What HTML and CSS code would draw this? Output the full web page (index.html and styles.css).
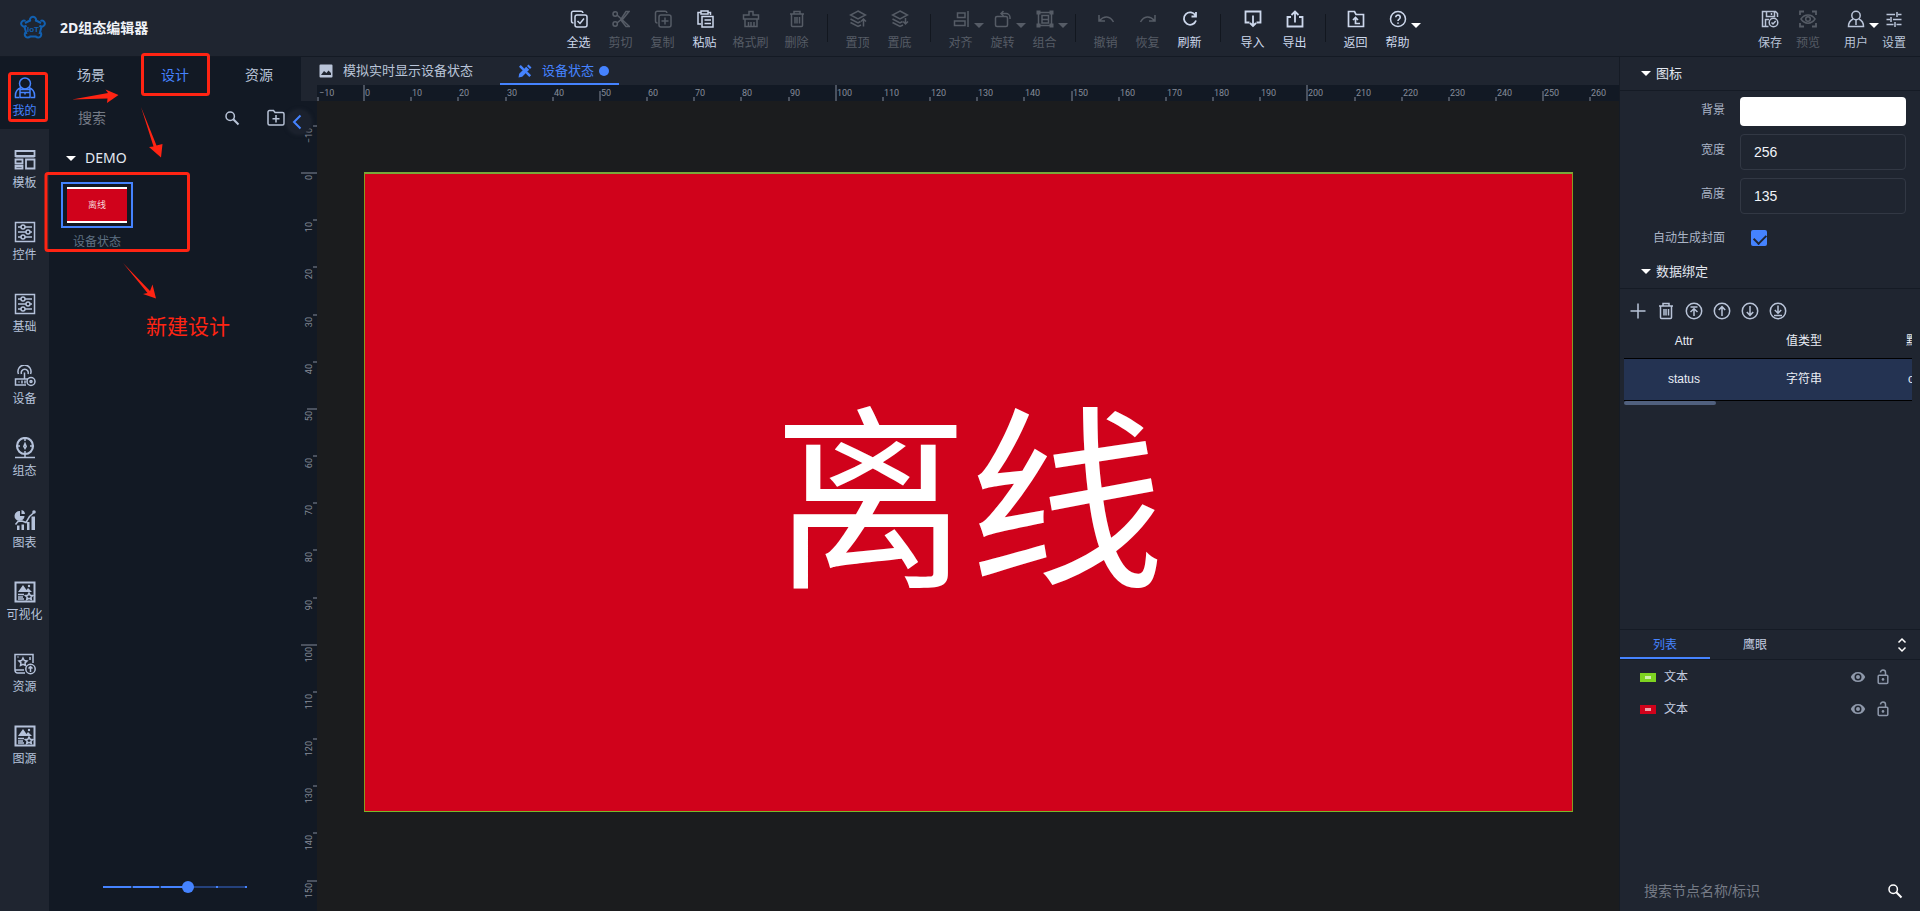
FILE: index.html
```html
<!DOCTYPE html>
<html lang="zh-CN">
<head>
<meta charset="utf-8">
<title>2D组态编辑器</title>
<link rel="stylesheet" href="styles.css">
</head>
<body>
<svg class="sprite" aria-hidden="true">
  <symbol id="i-selall" viewBox="0 0 18 18"><rect x="5" y="5" width="12" height="12" rx="2"/><path d="M3.500 13A2 2 0 0 1 1.500 11V3a1.700 1.700 0 0 1 1.700-1.700H11A2 2 0 0 1 13 3M7.500 11l2.500 2.500 4-5"/></symbol>
  <symbol id="i-cut" viewBox="0 0 18 18"><circle cx="3.200" cy="4" r="2.200"/><circle cx="3.200" cy="14" r="2.200"/><path d="M5 5l12.500 11.500h-3.500L8.500 9.500M5 13l3.500-3L14 1.500h3L10.500 9.500"/></symbol>
  <symbol id="i-copy" viewBox="0 0 18 18"><rect x="5" y="5" width="12" height="12" rx="2"/><path d="M3.500 13A2 2 0 0 1 1.500 11V3a1.700 1.700 0 0 1 1.700-1.700H11A2 2 0 0 1 13 3M11 7.500v7M7.500 11h7"/></symbol>
  <symbol id="i-paste" viewBox="0 0 18 18"><path d="M5 14H2V2.500h3M12 2.500h2.500V5"/><rect x="5" y="1" width="7" height="3" /><rect x="6" y="6.500" width="11" height="10.500"/><path d="M8.500 10H15M8.500 13.500H15"/></symbol>
  <symbol id="i-brush" viewBox="0 0 18 18"><path d="M1.500 9V5H7V1.500h4V5h5.500v4zM3 9v7.500h12V9M6.500 12v4.500M9 12v4.500M12 12v4.500"/></symbol>
  <symbol id="i-trash" viewBox="0 0 18 18"><path d="M2 4h14M6 3.500v-2h6v2M3.500 4v11.500a1 1 0 0 0 1 1h9a1 1 0 0 0 1-1V4M7 7v6.500M9 7v6.500M11.500 7v6.500"/></symbol>
  <symbol id="i-top" viewBox="0 0 18 18"><path d="M9 1l7.500 4L9 9 1.500 5zM1.500 9L9 13l2.500-1.500M1.500 12.500L9 16.500l3-1.500M14.500 16.500V9M12 11.500L14.500 9l2.500 2.500"/></symbol>
  <symbol id="i-bottom" viewBox="0 0 18 18"><path d="M9 1l7.500 4L9 9 1.500 5zM1.500 9L9 13l2.500-1.500M1.500 12.500L9 16.500l3-1.500M14.500 8v6M12.200 11.500l2.300 2.500 2.500-2.500"/></symbol>
  <symbol id="i-align" viewBox="0 0 18 18"><path d="M16 1v16M5.500 3H13v4.500H5.500zM2.500 11H13v4.500H2.500z"/></symbol>
  <symbol id="i-rotate" viewBox="0 0 18 18"><rect x="1.500" y="6.500" width="12" height="10" rx="1.500"/><path d="M7 3.500h5a4 4 0 0 1 4 4V9M9.500 1L7 3.500 9.500 6"/></symbol>
  <symbol id="i-group" viewBox="0 0 18 18"><path d="M2.500 2.500h13v13h-13zM6 5.500h6.500v4H6zM6 9.500V13h6.500V9.500"/><path class="solid" d="M0.500 0.500h4v4h-4zM13.500 0.500h4v4h-4zM0.500 13.500h4v4h-4zM13.500 13.500h4v4h-4z"/></symbol>
  <symbol id="i-undo" viewBox="0 0 18 18"><path d="M2 5v6h6M2.500 10.500C7 5.500 13 5.500 16.500 12"/></symbol>
  <symbol id="i-redo" viewBox="0 0 18 18"><path d="M16 5v6h-6M15.500 10.500C11 5.500 5 5.500 1.500 12"/></symbol>
  <symbol id="i-refresh" viewBox="0 0 18 18"><path d="M14.500 5.500A6.200 6.200 0 1 0 15 10.500M15 2v4.500h-4.500" stroke-width="1.800"/></symbol>
  <symbol id="i-import" viewBox="0 0 18 18"><path d="M5.500 12.500H1.500v-11h15v11h-4M9 5.500v10M6 13l3 3 3-3" stroke-width="1.800"/></symbol>
  <symbol id="i-export" viewBox="0 0 18 18"><path d="M5 7H1.500v9.500h15V7H13M9 12.500V2M5.500 5L9 1.500 12.500 5" stroke-width="1.800"/></symbol>
  <symbol id="i-back" viewBox="0 0 18 18"><path d="M1.500 1.500h6l1.500 3h7.500v12h-15zM13 13.500H8.500V8M6 10l2.500-2.500L11 10" stroke-width="1.700"/></symbol>
  <symbol id="i-help" viewBox="0 0 18 18"><circle cx="9" cy="9" r="7.500"/><path d="M6.800 7.300a2.200 2.200 0 1 1 3.400 1.800c-.8.500-1.200.9-1.200 1.900M9 12.600v1.200" stroke-width="1.700"/></symbol>
  <symbol id="i-save" viewBox="0 0 18 18"><path d="M7.500 16.500H1.500v-15h13l2 2v3.500M5.500 1.500v5h8v-5M10.500 3v2M4.500 16.500V9.500H8"/><circle cx="12.500" cy="12.500" r="4.300"/><path d="M10.500 12.500l1.500 1.500 2.700-3"/></symbol>
  <symbol id="i-preview" viewBox="0 0 18 18"><path d="M1 5V1.500h4M13 1.500h4V5M17 13v3.500h-4M5 16.500H1V13" stroke-width="1.800"/><path d="M2 9c3.500-5.500 10.500-5.500 14 0-3.500 5.500-10.500 5.500-14 0z"/><circle cx="9" cy="9" r="2.300"/></symbol>
  <symbol id="i-user" viewBox="0 0 18 18"><circle cx="9" cy="5.500" r="4.200"/><path d="M6 9C3 10.500 1.500 13 1.500 16.500h15C16.500 13 15 10.500 12 9M9 10v5"/></symbol>
  <symbol id="i-sliders" viewBox="0 0 18 18"><path d="M1.500 4.500h8.500M13 4.500h3.500M12 2v5M1.500 9.500H5M8 9.500h8.500M6 7v5M1.500 14.500h7M11.500 14.500h5M10 12v5"/></symbol>
  <symbol id="i-mine" viewBox="0 0 22 22"><circle cx="11" cy="6.500" r="5.500"/><path d="M7 10.500C3 12 1 16 1.500 20.500H5M15 10.500c4 1.500 6 5.500 5.500 10H17M6 12.500h10v8H6zM6 15.500h10M11 15.500v2"/></symbol>
  <symbol id="i-template" viewBox="0 0 22 22"><path d="M1.500 2h19v5h-19zM1.500 7.500h19M1.500 10.500h7v4h-7zM1.500 17h7v2.500h-7zM12 10.500h8.500v9H12z" stroke-width="1.800"/></symbol>
  <symbol id="i-control" viewBox="0 0 22 22"><rect x="1.500" y="1.500" width="19" height="19"/><path d="M4 6h3M11 6h7M4 11h8M16 11h2M4 16h3M11 16h7"/><circle cx="9" cy="6" r="2"/><circle cx="14" cy="11" r="2"/><circle cx="9" cy="16" r="2"/></symbol>
  <symbol id="i-device" viewBox="0 0 22 22"><path d="M4.500 9a6.500 6.500 0 1 1 12 0M7.500 9a3.500 3.500 0 1 1 6.500 0M10.500 7.500V14M12 20H1.500v-6H14M4.500 17h1M8 15.500v3M11 15.500v3"/><circle cx="17" cy="16.500" r="4"/><circle cx="17" cy="16.500" r="1"/></symbol>
  <symbol id="i-config" viewBox="0 0 22 22"><circle cx="11" cy="9" r="8" stroke-width="2.200"/><path d="M11 2v2M11 14v2M4 9h2M16 9h2M11 17v3M1 20.500h20M11 6.500L9.800 9.500l1.200 2 1.200-2z"/></symbol>
  <symbol id="i-chart" viewBox="0 0 22 22"><path class="solid" d="M6 2v5h4.500A5 5 0 1 1 6 2zM7.500 1A4.500 4.500 0 0 1 11 5H7.500zM3 16.500h2.500V21H3zM7.500 15.500H10V21H7.500zM13 13h2.500v8H13zM17.500 7.500h3.500V21h-3.500z"/><path d="M1.500 15.500L4 12.500 8 12l4 1.500 3.500-6 4-3.500"/><circle class="solid" cx="20" cy="3" r="1.800"/></symbol>
  <symbol id="i-visual" viewBox="0 0 22 22"><rect x="1.500" y="1.500" width="19" height="19" stroke-width="2"/><path class="solid" d="M4 11l5-7 3.500 5 1.500-2 4 4z"/><circle class="solid" cx="15" cy="5" r="1.200"/><path d="M4 13.500h6M4 16h5M4 18h6"/><path d="M15 12l1.200 2.200 2.500.3-1.800 1.700.4 2.300-2.300-1.200-2.300 1.200.5-2.300-1.800-1.700 2.500-.3z"/></symbol>
  <symbol id="i-resource" viewBox="0 0 22 22"><path d="M11 20H3.500a2.500 2.500 0 0 1-2.500-2.500V1.500h18V10M1 17h9M3.500 4h1M16 4v3"/><path d="M9 5l1.300 2.500 2.700.4-2 2 .5 2.600L9 11.300 6.500 12.500 7 9.900l-2-2 2.700-.4z"/><circle cx="16.500" cy="16" r="4.700"/><path d="M16.500 19v-5M14.500 15.500l2-2 2 2"/></symbol>
  <symbol id="i-search" viewBox="0 0 16 16"><circle cx="6.200" cy="6.200" r="4.200"/><path d="M9.300 9.300L14.500 14.500" stroke-width="2"/></symbol>
  <symbol id="i-folder" viewBox="0 0 18 18"><path d="M1 14V3a1.500 1.500 0 0 1 1.500-1.500h4l1.500 2h7.500A1.500 1.500 0 0 1 17 5v9.500a1.500 1.500 0 0 1-1.500 1.500h-13A1.500 1.500 0 0 1 1 14.500zM9 6v7.500M5.500 9.700h7"/></symbol>
  <symbol id="i-chev" viewBox="0 0 10 16"><path d="M8.500 1.500L2 8l6.500 6.500"/></symbol>
  <symbol id="i-image" viewBox="0 0 14 14"><path class="solid" fill-rule="evenodd" d="M1.500 0.500h11a1 1 0 0 1 1 1v11a1 1 0 0 1-1 1h-11a1 1 0 0 1-1-1v-11a1 1 0 0 1 1-1zM2 11h10V9L9.500 6.500 7.500 9 5 7z"/></symbol>
  <symbol id="i-design" viewBox="0 0 14 14"><path class="solid" d="M1 2.800L2.800 1 6.200 4.400 4.400 6.200zM7.800 9.600l1.800-1.800 3.500 3.500-1.800 1.800zM.5 13.500l.7-3.700 7-7 3 3-7 7zM9 2l1.500-1.500L13.500 3.500 12 5z"/><path d="M3.500 3.500l7 7" stroke-width="1"/></symbol>
  <symbol id="i-plus" viewBox="0 0 18 18"><path d="M9 1.500v15M1.500 9h15"/></symbol>
  <symbol id="i-ctop" viewBox="0 0 18 18"><circle cx="9" cy="9" r="7.700"/><path d="M5.500 5h7M9 14V7M5.500 10L9 6.800l3.500 3.200"/></symbol>
  <symbol id="i-cup" viewBox="0 0 18 18"><circle cx="9" cy="9" r="7.700"/><path d="M9 14V4.800M5.800 8L9 4.700 12.200 8"/></symbol>
  <symbol id="i-cdown" viewBox="0 0 18 18"><circle cx="9" cy="9" r="7.700"/><path d="M9 4v9.200M5.800 10L9 13.300l3.200-3.300"/></symbol>
  <symbol id="i-cbottom" viewBox="0 0 18 18"><circle cx="9" cy="9" r="7.700"/><path d="M5 13.500h8M9 3.500V11M5.800 8L9 11.200 12.200 8"/></symbol>
  <symbol id="i-sort" viewBox="0 0 10 16"><path d="M1.500 5.500L5 2l3.500 3.500M1.500 10.500L5 14l3.500-3.500"/></symbol>
  <symbol id="i-eye" viewBox="0 0 16 16"><path class="solid" fill-rule="evenodd" d="M8 3C4.500 3 2 5 .8 8 2 11 4.500 13 8 13s6-2 7.200-5C14 5 11.500 3 8 3zm0 8.500a3.500 3.500 0 1 1 0-7 3.500 3.500 0 0 1 0 7zM8 6a2 2 0 1 0 0 4 2 2 0 0 0 0-4z"/></symbol>
  <symbol id="i-lock" viewBox="0 0 12 16"><rect x="1.200" y="6.200" width="9.600" height="8.400" rx="1"/><path d="M3.500 3.500a2.500 2.500 0 0 1 5 0V6"/><circle class="solid" cx="6" cy="10.400" r="1.300"/></symbol>
</svg>

<div class="app">
  <header class="topbar">
    <div class="brand">
      <svg class="logo" viewBox="0 0 26 26" aria-hidden="true">
        <path d="M10 5.500L5 8M16 5.500L21 8M4.500 12l2 7M21.500 12l-2 7M9.500 21.500h7"/>
        <path d="M10.500 6.500a3 3 0 1 1 5 0M6.500 10.500A3 3 0 1 1 5.500 5.800M19.500 10.500a3 3 0 1 0 1-4.700M5.500 17.500a3 3 0 1 0 4.500 4M20.500 17.500a3 3 0 1 1-4.500 4"/>
        <text x="13" y="16.500" text-anchor="middle">IoT</text>
      </svg>
      <h1 class="title">2D组态编辑器</h1>
    </div>
    <nav class="tools">
      <button class="tool"><svg class="ico"><use href="#i-selall"/></svg>全选</button>
      <button class="tool off"><svg class="ico"><use href="#i-cut"/></svg>剪切</button>
      <button class="tool off"><svg class="ico"><use href="#i-copy"/></svg>复制</button>
      <button class="tool"><svg class="ico"><use href="#i-paste"/></svg>粘贴</button>
      <button class="tool wide off"><svg class="ico"><use href="#i-brush"/></svg>格式刷</button>
      <button class="tool off"><svg class="ico"><use href="#i-trash"/></svg>删除</button>
      <span class="sep"></span>
      <button class="tool off"><svg class="ico"><use href="#i-top"/></svg>置顶</button>
      <button class="tool off"><svg class="ico"><use href="#i-bottom"/></svg>置底</button>
      <span class="sep"></span>
      <button class="tool off drop"><svg class="ico"><use href="#i-align"/></svg>对齐</button>
      <button class="tool off drop"><svg class="ico"><use href="#i-rotate"/></svg>旋转</button>
      <button class="tool off drop"><svg class="ico"><use href="#i-group"/></svg>组合</button>
      <span class="sep"></span>
      <button class="tool off"><svg class="ico"><use href="#i-undo"/></svg>撤销</button>
      <button class="tool off"><svg class="ico"><use href="#i-redo"/></svg>恢复</button>
      <button class="tool"><svg class="ico"><use href="#i-refresh"/></svg>刷新</button>
      <span class="sep loose"></span>
      <button class="tool"><svg class="ico"><use href="#i-import"/></svg>导入</button>
      <button class="tool"><svg class="ico"><use href="#i-export"/></svg>导出</button>
      <span class="sep"></span>
      <button class="tool"><svg class="ico"><use href="#i-back"/></svg>返回</button>
      <button class="tool drop"><svg class="ico"><use href="#i-help"/></svg>帮助</button>
    </nav>
    <nav class="account">
      <button class="tool soft"><svg class="ico"><use href="#i-save"/></svg>保存</button>
      <button class="tool off"><svg class="ico"><use href="#i-preview"/></svg>预览</button>
      <button class="tool soft drop user"><svg class="ico"><use href="#i-user"/></svg>用户</button>
      <button class="tool soft"><svg class="ico"><use href="#i-sliders"/></svg>设置</button>
    </nav>
  </header>

  <div class="body">
    <nav class="rail">
      <button class="rail-item active"><svg class="rico"><use href="#i-mine"/></svg>我的</button>
      <button class="rail-item"><svg class="rico"><use href="#i-template"/></svg>模板</button>
      <button class="rail-item"><svg class="rico"><use href="#i-control"/></svg>控件</button>
      <button class="rail-item"><svg class="rico"><use href="#i-control"/></svg>基础</button>
      <button class="rail-item"><svg class="rico"><use href="#i-device"/></svg>设备</button>
      <button class="rail-item"><svg class="rico"><use href="#i-config"/></svg>组态</button>
      <button class="rail-item"><svg class="rico"><use href="#i-chart"/></svg>图表</button>
      <button class="rail-item"><svg class="rico"><use href="#i-visual"/></svg>可视化</button>
      <button class="rail-item"><svg class="rico"><use href="#i-resource"/></svg>资源</button>
      <button class="rail-item"><svg class="rico"><use href="#i-visual"/></svg>图源</button>
    </nav>

    <aside class="library">
      <div class="lib-tabs">
        <button class="lib-tab">场景</button>
        <button class="lib-tab active">设计</button>
        <button class="lib-tab">资源</button>
      </div>
      <div class="lib-search">
        <input class="lib-input" type="text" placeholder="搜索" aria-label="搜索">
        <button class="icon-btn" aria-label="搜索"><svg class="ico-s"><use href="#i-search"/></svg></button>
        <button class="icon-btn" aria-label="新建文件夹"><svg class="ico"><use href="#i-folder"/></svg></button>
      </div>
      <button class="folder"><span class="caret"></span>DEMO</button>
      <div class="cards">
        <figure class="card">
          <div class="card-frame"><div class="card-img"><span>离线</span></div></div>
          <figcaption>设备状态</figcaption>
        </figure>
      </div>
      <input class="zoom" type="range" min="0" max="5" value="3" aria-label="缩放">
      <button class="collapse" aria-label="收起"><svg><use href="#i-chev"/></svg></button>
    </aside>

    <main class="center">
      <div class="file-tabs">
        <button class="file-tab"><svg class="ico-t"><use href="#i-image"/></svg>模拟实时显示设备状态</button>
        <button class="file-tab active"><svg class="ico-t"><use href="#i-design"/></svg>设备状态<span class="dot"></span></button>
      </div>
      <div class="stage">
        <div class="corner"></div>
        <svg class="ruler ruler-h" id="ruler-h"></svg>
        <svg class="ruler ruler-v" id="ruler-v"></svg>
        <div class="workspace"><div class="board">离线</div></div>
      </div>
    </main>

    <aside class="props">
      <section class="upper">
        <h2 class="section"><span class="caret"></span>图标</h2>
        <form class="fields">
          <label class="lbl first" for="bg">背景</label>
          <button class="swatch" id="bg" type="button"></button>
          <label class="lbl" for="w">宽度</label>
          <input class="num" id="w" type="text" value="256">
          <label class="lbl" for="h">高度</label>
          <input class="num" id="h" type="text" value="135">
          <label class="lbl" for="cover">自动生成封面</label>
          <input class="check" id="cover" type="checkbox" checked>
        </form>
        <h2 class="section"><span class="caret"></span>数据绑定</h2>
        <div class="bind-tools">
          <button class="icon-btn" aria-label="新增"><svg class="ico"><use href="#i-plus"/></svg></button>
          <button class="icon-btn" aria-label="删除"><svg class="ico"><use href="#i-trash"/></svg></button>
          <button class="icon-btn" aria-label="置顶"><svg class="ico"><use href="#i-ctop"/></svg></button>
          <button class="icon-btn" aria-label="上移"><svg class="ico"><use href="#i-cup"/></svg></button>
          <button class="icon-btn" aria-label="下移"><svg class="ico"><use href="#i-cdown"/></svg></button>
          <button class="icon-btn" aria-label="置底"><svg class="ico"><use href="#i-cbottom"/></svg></button>
        </div>
        <div class="table-wrap">
          <table class="bind">
            <thead><tr><th>Attr</th><th>值类型</th><th>默认值</th></tr></thead>
            <tbody><tr><td>status</td><td>字符串</td><td>offline</td></tr></tbody>
          </table>
          <div class="scroll-thumb"></div>
        </div>
      </section>
      <section class="lower">
        <div class="layer-tabs">
          <button class="layer-tab active">列表</button>
          <button class="layer-tab">鹰眼</button>
          <button class="icon-btn sort" aria-label="展开"><svg><use href="#i-sort"/></svg></button>
        </div>
        <ul class="layers">
          <li class="layer"><span class="chip green"></span><span class="name">文本</span><svg class="eye"><use href="#i-eye"/></svg><svg class="lock"><use href="#i-lock"/></svg></li>
          <li class="layer"><span class="chip red"></span><span class="name">文本</span><svg class="eye"><use href="#i-eye"/></svg><svg class="lock"><use href="#i-lock"/></svg></li>
        </ul>
        <div class="layer-search">
          <input class="lib-input" type="text" placeholder="搜索节点名称/标识" aria-label="搜索节点名称/标识">
          <button class="icon-btn bright" aria-label="搜索"><svg class="ico-s"><use href="#i-search"/></svg></button>
        </div>
      </section>
    </aside>
  </div>

  <div class="notes">
    <svg class="note-art" viewBox="0 0 330 340" aria-hidden="true">
      <rect x="9.500" y="73.500" width="37" height="47" rx="2"/>
      <rect x="142.500" y="54.500" width="66" height="40" rx="2"/>
      <rect x="46" y="173.500" width="142.500" height="77" rx="2"/>
      <path class="arrow" d="M72 99.500L108 93l-2.500-3.500L118.500 95 107 103l.500-4.500z"/>
      <path class="arrow" d="M141 107l15.500 38.500 6-1.500-1.500 13.500L149 147l4.500-.500z"/>
      <path class="arrow" d="M123 263l27 28 2.500-6.500 3.500 14L143 294l4.500-1z"/>
    </svg>
    <p class="note-text">新建设计</p>
  </div>
</div>
<script src="app.js"></script>
</body>
</html>
```
FILE: styles.css
```css
* { box-sizing: border-box; }
body { margin: 0; background: #1b1c1e; color: #c3cde0; font: 12px/16px "Liberation Sans", "Noto Sans CJK SC", sans-serif; }
button, input { font: inherit; color: inherit; border: 0; background: none; padding: 0; margin: 0; outline: 0; }
h1, h2, p, ul, figure { margin: 0; padding: 0; list-style: none; }
svg { fill: none; stroke: currentColor; stroke-width: 1.5; }
.sprite { position: absolute; width: 0; height: 0; }
.solid { fill: currentColor; stroke: none; }
.ico { width: 18px; height: 18px; display: block; }
.ico-s { width: 16px; height: 16px; display: block; }
.ico-t { width: 14px; height: 14px; display: block; }

.app { position: relative; display: flex; flex-direction: column; height: 100vh; overflow: hidden; }

.topbar { display: flex; justify-content: space-between; flex: none; background: #1f2530; border-bottom: 1px solid #141a24; }
.brand { display: flex; align-items: center; gap: 14px; padding-left: 20px; min-width: 225px; }
.logo { width: 26px; height: 26px; color: #1260b0; stroke-width: 2; }
.logo text { font: 700 8px "Liberation Sans", sans-serif; fill: #1260b0; stroke: none; }
.title { font: 700 14px/20px "Noto Sans", "Noto Sans CJK SC", sans-serif; color: #f0f3f8; }
.tools { display: flex; }
.account { display: flex; padding-right: 7px; }
.tool { position: relative; display: flex; flex-direction: column; align-items: center; gap: 7px; width: 42px; padding: 10px 0 5px; color: #cdd8ec; white-space: nowrap; }
.tool.wide { width: 50px; }
.tool.off { color: #565c66; }
.tool.soft { color: #b9c4d8; }
.account .tool { width: 38px; }
.account .user { margin-left: 10px; }
.drop::after { content: ""; position: absolute; left: 34px; top: 23px; border: 5px solid transparent; border-top-color: #fff; border-bottom: 0; }
.user::after { left: 32px; }
.off.drop::after { border-top-color: #565c66; }
.sep { width: 1px; height: 28px; margin: 14px 9px; background: #12171f; }
.sep.loose { margin-right: 11px; }

.body { display: flex; flex: 1; min-height: 0; }
.rail { display: flex; flex-direction: column; width: 49px; background: #1f2530; }
.rail-item { display: flex; flex-direction: column; align-items: center; gap: 4px; height: 72px; padding-top: 20px; color: #b5c2da; white-space: nowrap; }
.rail-item.active { background: #121924; color: #4583ff; }
.rico { width: 22px; height: 22px; display: block; flex: none; }

.library { position: relative; z-index: 1; display: flex; flex-direction: column; width: 252px; background: #121924; }
.lib-tabs { display: flex; font-size: 14px; }
.lib-tab { flex: 1; height: 36px; color: #b9c4d8; }
.lib-tab.active { color: #4583ff; }
.lib-search { display: flex; align-items: center; gap: 27px; height: 50px; padding: 0 16px 0 29px; }
.lib-input { flex: 1; min-width: 0; font-size: 14px; line-height: 20px; }
.lib-input::placeholder { color: #757b86; opacity: 1; }
.icon-btn { color: #b9c4d8; display: flex; }
.icon-btn.bright { color: #fff; }
.folder { display: flex; align-items: center; gap: 9px; height: 30px; padding-left: 17px; font: 14px/20px "Noto Sans", sans-serif; color: #e4e9f2; }
.caret { border: 5px solid transparent; border-top-color: #fff; border-bottom: 0; }
.cards { flex: 1; padding: 9px 12px; }
.card { display: flex; flex-direction: column; width: 72px; gap: 6px; text-align: center; color: #5f7183; }
.card-frame { border: 2px solid #4583ff; padding: 3px 4px; }
.card-img { height: 36px; border: solid #fff; border-width: 2px 0; background: #d0021b; color: #f5d5d8; font-size: 9px; line-height: 32px; }
.zoom { appearance: none; width: 144px; height: 12px; margin: 0 auto 18px; }
.zoom::-webkit-slider-runnable-track { height: 2px; background: linear-gradient(90deg, #4583ff 28px, #22406f 28px 30px, #4583ff 30px 56px, #22406f 56px 58px, #4583ff 58px 86px, #24417c 86px 113px, #4583ff 113px 115px, #24417c 115px 142px, #4583ff 142px); }
.zoom::-webkit-slider-thumb { appearance: none; width: 12px; height: 12px; margin-top: -5px; border-radius: 6px; background: #4583ff; }
.collapse { position: absolute; right: -10px; top: 53px; display: flex; align-items: center; justify-content: center; width: 24px; height: 24px; padding-right: 5px; border-radius: 12px; background: #1b212d; color: #4583ff; box-shadow: 0 0 4px #242a36; }
.collapse svg { width: 10px; height: 16px; stroke-width: 2; }

.center { display: flex; flex-direction: column; flex: 1; min-width: 0; background: #1f2530; }
.file-tabs { display: flex; height: 28px; font-size: 13px; }
.file-tab { display: flex; align-items: center; gap: 10px; padding: 0 27px 0 18px; color: #b9c4d8; }
.file-tab.active { padding: 2px 10px 0 18px; border-bottom: 2px solid #4583ff; color: #4583ff; }
.dot { width: 10px; height: 10px; margin-left: -5px; border-radius: 5px; background: #4583ff; }
.stage { display: grid; grid-template: 16px 1fr / 16px 1fr; flex: 1; min-height: 0; }
.ruler { display: block; width: 100%; height: 100%; background: #121924; overflow: hidden; }
.ruler text { font: 9px Roboto, sans-serif; fill: #858c99; stroke: none; }
.ruler rect { fill: #4a515e; stroke: none; }
.workspace { display: flex; min-width: 0; padding: 71px 46px 99px 47px; background: #1b1c1e; }
.board { flex: 1; display: flex; align-items: center; justify-content: center; min-width: 0; padding-top: 24px; border: 1px solid #8a9a20; border-top: 2px solid #7aa83a; border-bottom-color: #7ab82a; background: #d0021b; color: #fff; font-size: 196px; line-height: 200px; }

.props { display: flex; flex-direction: column; width: 301px; border-left: 1px solid #151b25; background: #1f2530; }
.upper { flex: 1; min-height: 0; }
.section { display: flex; align-items: center; gap: 5px; height: 34px; padding-left: 21px; border-bottom: 1px solid #151b25; font-size: 13px; font-weight: 400; color: #e2e7f0; }
.fields { display: grid; grid-template-columns: 105px 1fr; column-gap: 15px; row-gap: 8px; padding: 6px 14px 9px 0; }
.lbl { text-align: right; padding-top: 8px; color: #aab4c6; }
.lbl.first { padding-top: 5px; }
.swatch { height: 29px; border-radius: 4px; background: #fff; }
.num { width: 100%; height: 36px; padding: 0 13px; border: 1px solid #323844; border-radius: 4px; font-size: 14px; color: #f0f3f8; }
.check { appearance: none; width: 16px; height: 16px; margin: 8px 0 0 11px; border-radius: 2px; background: #4583ff; }
.check:checked::after { content: ""; display: block; width: 10px; height: 6px; margin: 4px 0 0 3px; border: solid #1f2530; border-width: 0 0 2px 2px; transform: rotate(-45deg); }
.bind-tools { display: flex; gap: 10px; padding: 13px 9px 12px; }
.table-wrap { margin: 0 8px 0 4px; overflow: hidden; }
.bind { table-layout: fixed; width: 360px; border-collapse: collapse; color: #e8ecf4; text-align: center; }
.bind th { font-weight: 400; height: 26px; padding: 0 0 8px; }
.bind th, .bind td { border-bottom: 1px solid #000; }
.bind td { height: 42px; background: #243352; }
.scroll-thumb { width: 32%; height: 4px; border-radius: 2px; background: #50607e; }
.lower { display: flex; flex-direction: column; height: 33%; border-top: 1px solid #151b25; }
.layer-tabs { display: flex; height: 30px; border-bottom: 1px solid #151b25; flex: none; }
.layer-tab { width: 90px; padding-top: 2px; border-bottom: 2px solid transparent; }
.layer-tab.active { color: #4583ff; border-bottom-color: #4583ff; }
.sort { margin: auto 13px auto auto; color: #fff; }
.sort svg { width: 10px; height: 16px; }
.layers { flex: 1; padding-top: 1px; }
.layer { display: flex; align-items: center; height: 32px; padding: 0 31px 0 20px; }
.chip { width: 16px; height: 9px; background: linear-gradient(#ffffffa0, #ffffffa0) center / 6px 3px no-repeat; margin-right: 8px; }
.green { background-color: #7ed321; }
.red { background-color: #d0021b; }
.name { flex: 1; }
.eye { width: 16px; height: 16px; margin-right: 11px; color: #8e98aa; }
.lock { width: 12px; height: 16px; color: #8e98aa; }
.layer-search { display: flex; align-items: center; padding: 0 17px 10px 24px; }

.notes { position: absolute; left: 0; top: 0; z-index: 2; color: #ff2413; pointer-events: none; }
.note-art { display: block; width: 330px; height: 340px; stroke-width: 3; }
.arrow { fill: currentColor; stroke: none; }
.note-text { position: absolute; left: 146px; top: 312px; font-size: 21px; line-height: 30px; white-space: nowrap; }
```
FILE: app.js
```js
const NS = "http://www.w3.org/2000/svg";
const SCALE = 4.717;

function add(parent, tag, attrs, text) {
  const el = document.createElementNS(NS, tag);
  for (const key in attrs) el.setAttribute(key, attrs[key]);
  if (text !== undefined) el.textContent = text;
  parent.appendChild(el);
}

function drawRuler(svg, origin, last, vertical) {
  for (let v = -10; v <= last; v += 10) {
    const p = Math.max(0, Math.round(origin + v * SCALE));
    const len = v % 100 === 0 ? 16 : v % 50 === 0 ? 10 : 4;
    const label = String(v).replace("-", "−");
    if (vertical) {
      add(svg, "rect", { x: 16 - len, y: p, width: len, height: 2 });
      add(svg, "text", { transform: `translate(11 ${p + 3}) rotate(-90)`, "text-anchor": "end" }, label);
    } else {
      add(svg, "rect", { x: p, y: 16 - len, width: 2, height: len });
      add(svg, "text", { x: p + 2, y: 11 }, label);
    }
  }
}

drawRuler(document.getElementById("ruler-h"), 46, 260, false);
drawRuler(document.getElementById("ruler-v"), 71, 150, true);
```
